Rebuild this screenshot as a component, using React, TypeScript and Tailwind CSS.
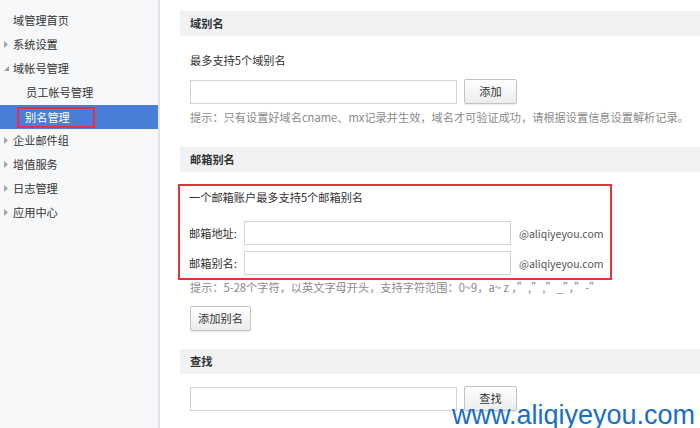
import React from "react";

const font = { fontFamily: '"Noto Sans CJK SC", "Liberation Sans", sans-serif' };

type NavItem = { label: string; arrow?: "right" | "down"; sub?: boolean; active?: boolean };

const navItems: NavItem[] = [
  { label: "域管理首页" },
  { label: "系统设置", arrow: "right" },
  { label: "域帐号管理", arrow: "down" },
  { label: "员工帐号管理", sub: true },
  { label: "别名管理", sub: true, active: true },
  { label: "企业邮件组", arrow: "right" },
  { label: "增值服务", arrow: "right" },
  { label: "日志管理", arrow: "right" },
  { label: "应用中心", arrow: "right" },
];

function Arrow({ dir }: { dir: "right" | "down" }) {
  if (dir === "down") {
    return (
      <svg width="5" height="5" viewBox="0 0 5 5">
        <path d="M5 0 L5 5 L0 5 Z" fill="#9a9a9a" />
      </svg>
    );
  }
  return (
    <svg width="4" height="7" viewBox="0 0 4 7">
      <path d="M0 0 L4 3.5 L0 7 Z" fill="#a8a8a8" />
    </svg>
  );
}

function Sidebar() {
  return (
    <aside className="w-[160px] shrink-0 bg-[#f7f8fa] border-r-2 border-[#e1e3e6] pt-2">
      {navItems.map((item) => (
        <div
          key={item.label}
          className={
            item.active
              ? "h-6 mt-[1px] mb-[-1px] flex items-center bg-[#4a7fd9] text-white"
              : "h-6 flex items-center text-[#333]"
          }
        >
          {item.sub ? (
            item.active ? (
              <span className="ml-[17px] h-[21px] w-[78px] border-2 border-[#e2343b] flex items-center pl-[6px]">
                {item.label}
              </span>
            ) : (
              <span className="ml-[26px]">{item.label}</span>
            )
          ) : (
            <div className="flex items-center pl-[4px]">
              <div className="w-[9px] flex items-center">{item.arrow && <Arrow dir={item.arrow} />}</div>
              <span>{item.label}</span>
            </div>
          )}
        </div>
      ))}
    </aside>
  );
}

function Bar({ title }: { title: string }) {
  return (
    <div className="h-[25px] bg-[#f1f2f4] flex items-center px-[10px] font-bold text-[#333]">{title}</div>
  );
}

function Btn({ label, w }: { label: string; w: string }) {
  return (
    <button
      className={`${w} h-[25px] shrink-0 rounded-[2px] border border-[#c3c3c3] bg-gradient-to-b from-white to-[#ececec] text-[#333] text-[11.2px] shadow-[0_1px_1px_rgba(0,0,0,0.08)]`}
    >
      {label}
    </button>
  );
}

function Field() {
  return <input className="w-[267px] h-[24px] shrink-0 border border-[#d4d4d4] bg-white outline-none" />;
}

export default function App() {
  return (
    <div className="relative w-[700px] h-[428px] overflow-hidden bg-white flex text-[11.2px] leading-[17px]" style={font}>
      <Sidebar />

      <main className="flex-1 pl-[20px] pt-[11px]">
        {/* 域别名 */}
        <Bar title="域别名" />
        <div className="pl-[10px]">
          <p className="mt-[16px] text-[#333]">最多支持5个域别名</p>
          <div className="mt-[10px] flex items-center gap-[7px]">
            <Field />
            <Btn label="添加" w="w-[53px]" />
          </div>
          <p className="mt-[5px] text-[#8a8a8a] whitespace-nowrap">
            提示：只有设置好域名cname、mx记录并生效，域名才可验证成功，请根据设置信息设置解析记录。
          </p>
        </div>

        {/* 邮箱别名 */}
        <div className="mt-[21px]">
          <Bar title="邮箱别名" />
        </div>
        <div className="mt-[12px] -ml-[2px] w-[434px] border-2 border-[#e2343b] pl-[9px] pt-[3px] pb-[3px]">
          <p className="text-[#333]">一个邮箱账户最多支持5个邮箱别名</p>
          <div className="mt-[15px] flex items-center">
            <span className="w-[55px] shrink-0 text-[#333]">邮箱地址:</span>
            <Field />
            <span className="ml-[8px] text-[#555] text-[10.5px] whitespace-nowrap">@aliqiyeyou.com</span>
          </div>
          <div className="mt-[6px] flex items-center">
            <span className="w-[55px] shrink-0 text-[#333]">邮箱别名:</span>
            <Field />
            <span className="ml-[8px] text-[#555] text-[10.5px] whitespace-nowrap">@aliqiyeyou.com</span>
          </div>
        </div>
        <div className="pl-[10px]">
          <p className="-mt-[1px] text-[#8a8a8a] whitespace-nowrap">
            提示：5-28个字符，以英文字母开头，支持字符范围：0~9，a~ z ，”,”,”_”，”-”
          </p>
          <div className="mt-[10px]">
            <Btn label="添加别名" w="w-[61px]" />
          </div>
        </div>

        {/* 查找 */}
        <div className="mt-[18px]">
          <Bar title="查找" />
        </div>
        <div className="pl-[10px] mt-[12px] flex items-center gap-[7px]">
          <Field />
          <Btn label="查找" w="w-[53px]" />
        </div>
      </main>

      <div
        className="absolute right-[5px] bottom-[-4px] text-[27px] leading-[34px] text-[#1a6ec4]"
        style={{ fontFamily: '"Liberation Sans", Arial, sans-serif' }}
      >
        www.aliqiyeyou.com
      </div>
    </div>
  );
}
